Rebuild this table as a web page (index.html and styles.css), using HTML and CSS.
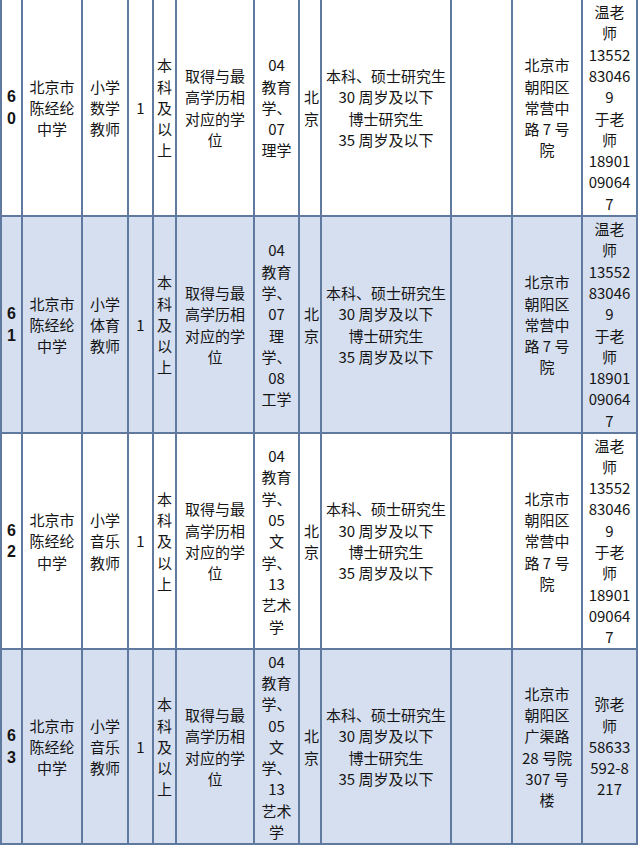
FILE: index.html
```html
<!DOCTYPE html>
<html lang="zh-CN">
<head>
<meta charset="utf-8">
<title>招聘岗位表</title>
<link rel="stylesheet" href="styles.css">
</head>
<body>
<table class="jobs">
  <colgroup>
    <col class="c-no"><col class="c-school"><col class="c-post"><col class="c-num"><col class="c-edu"><col class="c-degree"><col class="c-major"><col class="c-place"><col class="c-age"><col class="c-other"><col class="c-addr"><col class="c-contact">
  </colgroup>
  <tbody>
    <tr class="row r-a">
      <td class="no">6<br>0</td>
      <td>北京市<br>陈经纶<br>中学</td>
      <td>小学<br>数学<br>教师</td>
      <td>1</td>
      <td>本<br>科<br>及<br>以<br>上</td>
      <td>取得与最<br>高学历相<br>对应的学<br>位</td>
      <td>04<br>教育<br>学、<br>07<br>理学</td>
      <td class="place">北<br>京</td>
      <td>本科、硕士研究生<br>30 周岁及以下<br>博士研究生<br>35 周岁及以下</td>
      <td></td>
      <td>北京市<br>朝阳区<br>常营中<br>路 7 号<br>院</td>
      <td>温老<br>师<br>13552<br>83046<br>9<br>于老<br>师<br>18901<br>09064<br>7</td>
    </tr>
    <tr class="row r-b alt">
      <td class="no">6<br>1</td>
      <td>北京市<br>陈经纶<br>中学</td>
      <td>小学<br>体育<br>教师</td>
      <td>1</td>
      <td>本<br>科<br>及<br>以<br>上</td>
      <td>取得与最<br>高学历相<br>对应的学<br>位</td>
      <td>04<br>教育<br>学、<br>07<br>理<br>学、<br>08<br>工学</td>
      <td class="place">北<br>京</td>
      <td>本科、硕士研究生<br>30 周岁及以下<br>博士研究生<br>35 周岁及以下</td>
      <td></td>
      <td>北京市<br>朝阳区<br>常营中<br>路 7 号<br>院</td>
      <td>温老<br>师<br>13552<br>83046<br>9<br>于老<br>师<br>18901<br>09064<br>7</td>
    </tr>
    <tr class="row r-c">
      <td class="no">6<br>2</td>
      <td>北京市<br>陈经纶<br>中学</td>
      <td>小学<br>音乐<br>教师</td>
      <td>1</td>
      <td>本<br>科<br>及<br>以<br>上</td>
      <td>取得与最<br>高学历相<br>对应的学<br>位</td>
      <td>04<br>教育<br>学、<br>05<br>文<br>学、<br>13<br>艺术<br>学</td>
      <td class="place">北<br>京</td>
      <td>本科、硕士研究生<br>30 周岁及以下<br>博士研究生<br>35 周岁及以下</td>
      <td></td>
      <td>北京市<br>朝阳区<br>常营中<br>路 7 号<br>院</td>
      <td>温老<br>师<br>13552<br>83046<br>9<br>于老<br>师<br>18901<br>09064<br>7</td>
    </tr>
    <tr class="row r-d alt">
      <td class="no">6<br>3</td>
      <td>北京市<br>陈经纶<br>中学</td>
      <td>小学<br>音乐<br>教师</td>
      <td>1</td>
      <td>本<br>科<br>及<br>以<br>上</td>
      <td>取得与最<br>高学历相<br>对应的学<br>位</td>
      <td>04<br>教育<br>学、<br>05<br>文<br>学、<br>13<br>艺术<br>学</td>
      <td class="place">北<br>京</td>
      <td>本科、硕士研究生<br>30 周岁及以下<br>博士研究生<br>35 周岁及以下</td>
      <td></td>
      <td>北京市<br>朝阳区<br>广渠路<br>28 号院<br>307 号<br>楼</td>
      <td>弥老<br>师<br>58633<br>592-8<br>217</td>
    </tr>
  </tbody>
</table>
</body>
</html>
```

FILE: styles.css
```css
html, body {
  margin: 0;
  padding: 0;
  background: #ffffff;
}

body {
  width: 640px;
  height: 847px;
  overflow: hidden;
  font-family: "Noto Sans CJK SC", "Noto Sans", sans-serif;
  color: #151515;
}

.jobs {
  border-collapse: collapse;
  table-layout: fixed;
  width: 638px;
  font-size: 15px;
  line-height: 21.3px;
}

.c-no { width: 21px; }
.c-school { width: 60px; }
.c-post { width: 46px; }
.c-num { width: 25px; }
.c-edu { width: 23px; }
.c-degree { width: 78px; }
.c-major { width: 45px; }
.c-place { width: 22px; }
.c-age { width: 130px; }
.c-other { width: 61px; }
.c-addr { width: 70px; }
.c-contact { width: 55px; }

.jobs td {
  border: 2px solid #60799f;
  padding: 0;
  text-align: center;
  vertical-align: middle;
  white-space: nowrap;
  overflow: hidden;
}

.jobs tr:first-child td {
  border-top: none;
}

.r-a td { height: 215px; }
.r-b td { height: 215px; }
.r-c td { height: 214px; }
.r-d td { height: 193px; }

.alt td {
  background: #d5dff0;
}

.jobs td.no {
  font-family: "Liberation Sans", "Noto Sans", sans-serif;
  font-weight: bold;
  font-size: 16px;
}

.jobs td.place {
  text-align: left;
  padding-left: 4px;
}
```
